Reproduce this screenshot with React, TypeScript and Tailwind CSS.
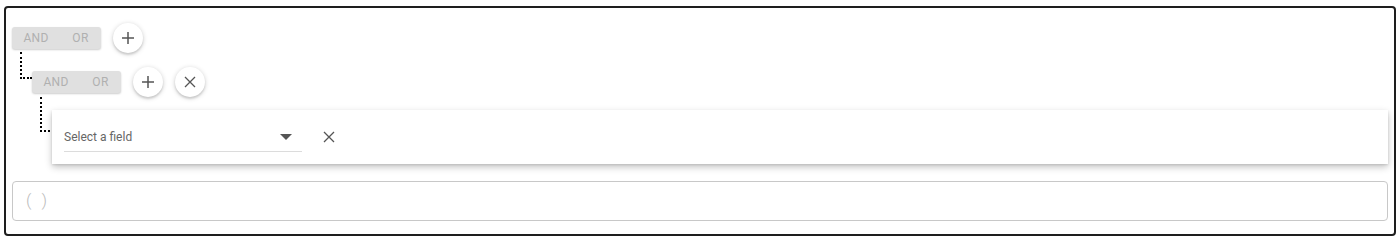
import React from "react";

const font = { fontFamily: "Roboto, 'Liberation Sans', sans-serif" };

const PlusIcon = () => (
  <svg width="14" height="14" viewBox="0 0 14 14" fill="none" stroke="#555" strokeWidth="1.5">
    <path d="M7 1v12M1 7h12" />
  </svg>
);

const CloseIcon = ({ size = 12 }: { size?: number }) => (
  <svg width={size} height={size} viewBox="0 0 12 12" fill="none" stroke="#555" strokeWidth="1.3">
    <path d="M1 1l10 10M11 1L1 11" />
  </svg>
);

const RoundButton = ({ children }: { children: React.ReactNode }) => (
  <button className="flex h-[30px] w-[30px] items-center justify-center rounded-full bg-white shadow-[0_1px_5px_rgba(0,0,0,0.2),0_2px_2px_rgba(0,0,0,0.1)]">
    {children}
  </button>
);

const Combinator = () => (
  <div className="flex h-[22px] w-[89px] rounded-[3px] bg-[#e0e0e0] text-[12px] tracking-[0.3px] text-[#b0b0b0] shadow-[0_1px_2px_rgba(0,0,0,0.2)]">
    <span className="flex w-[48px] items-center justify-center">AND</span>
    <span className="flex flex-1 items-center justify-center">OR</span>
  </div>
);

export default function App() {
  return (
    <div className="h-[244px] w-full bg-white pt-[6px] pl-[4px]" style={font}>
      <div className="flex h-[230px] w-[1392px] flex-col rounded-[4px] border-2 border-[#1e1e1e] px-[6px] pt-[15px]">
        <div className="flex h-[30px] items-center gap-[12px]">
          <Combinator />
          <RoundButton><PlusIcon /></RoundButton>
        </div>

        <div className="relative mt-[14px] flex h-[30px] items-center gap-[12px] pl-[20px]">
          <div className="absolute top-[-15px] left-[8px] h-[27px] w-[12px] border-b-2 border-l-2 border-dotted border-black" />
          <Combinator />
          <RoundButton><PlusIcon /></RoundButton>
          <RoundButton><CloseIcon /></RoundButton>
        </div>

        <div className="relative mt-[13px] ml-[40px] flex h-[54px] items-center bg-white pl-[12px] shadow-[0_3px_7px_rgba(0,0,0,0.24),0_1px_2px_rgba(0,0,0,0.1)]">
          <div className="absolute top-[-13px] left-[-12px] h-[35px] w-[10px] border-b-2 border-l-2 border-dotted border-black" />
          <div className="flex h-[30px] w-[238px] items-center justify-between border-b border-[#dcdcdc] pr-[10px] text-[12px] text-[#666]">
            <span>Select a field</span>
            <svg width="12" height="6" viewBox="0 0 12 6">
              <path d="M0 0h12L6 6z" fill="#555" />
            </svg>
          </div>
          <div className="ml-[21px]">
            <CloseIcon size={12} />
          </div>
        </div>

        <div className="mt-[17px] flex h-[40px] items-center gap-[10px] rounded-[4px] border border-[#c8c8c8] pl-[13px] text-[17px] font-light text-[#bcbcbc]">
          <span>(</span>
          <span>)</span>
        </div>
      </div>
    </div>
  );
}
